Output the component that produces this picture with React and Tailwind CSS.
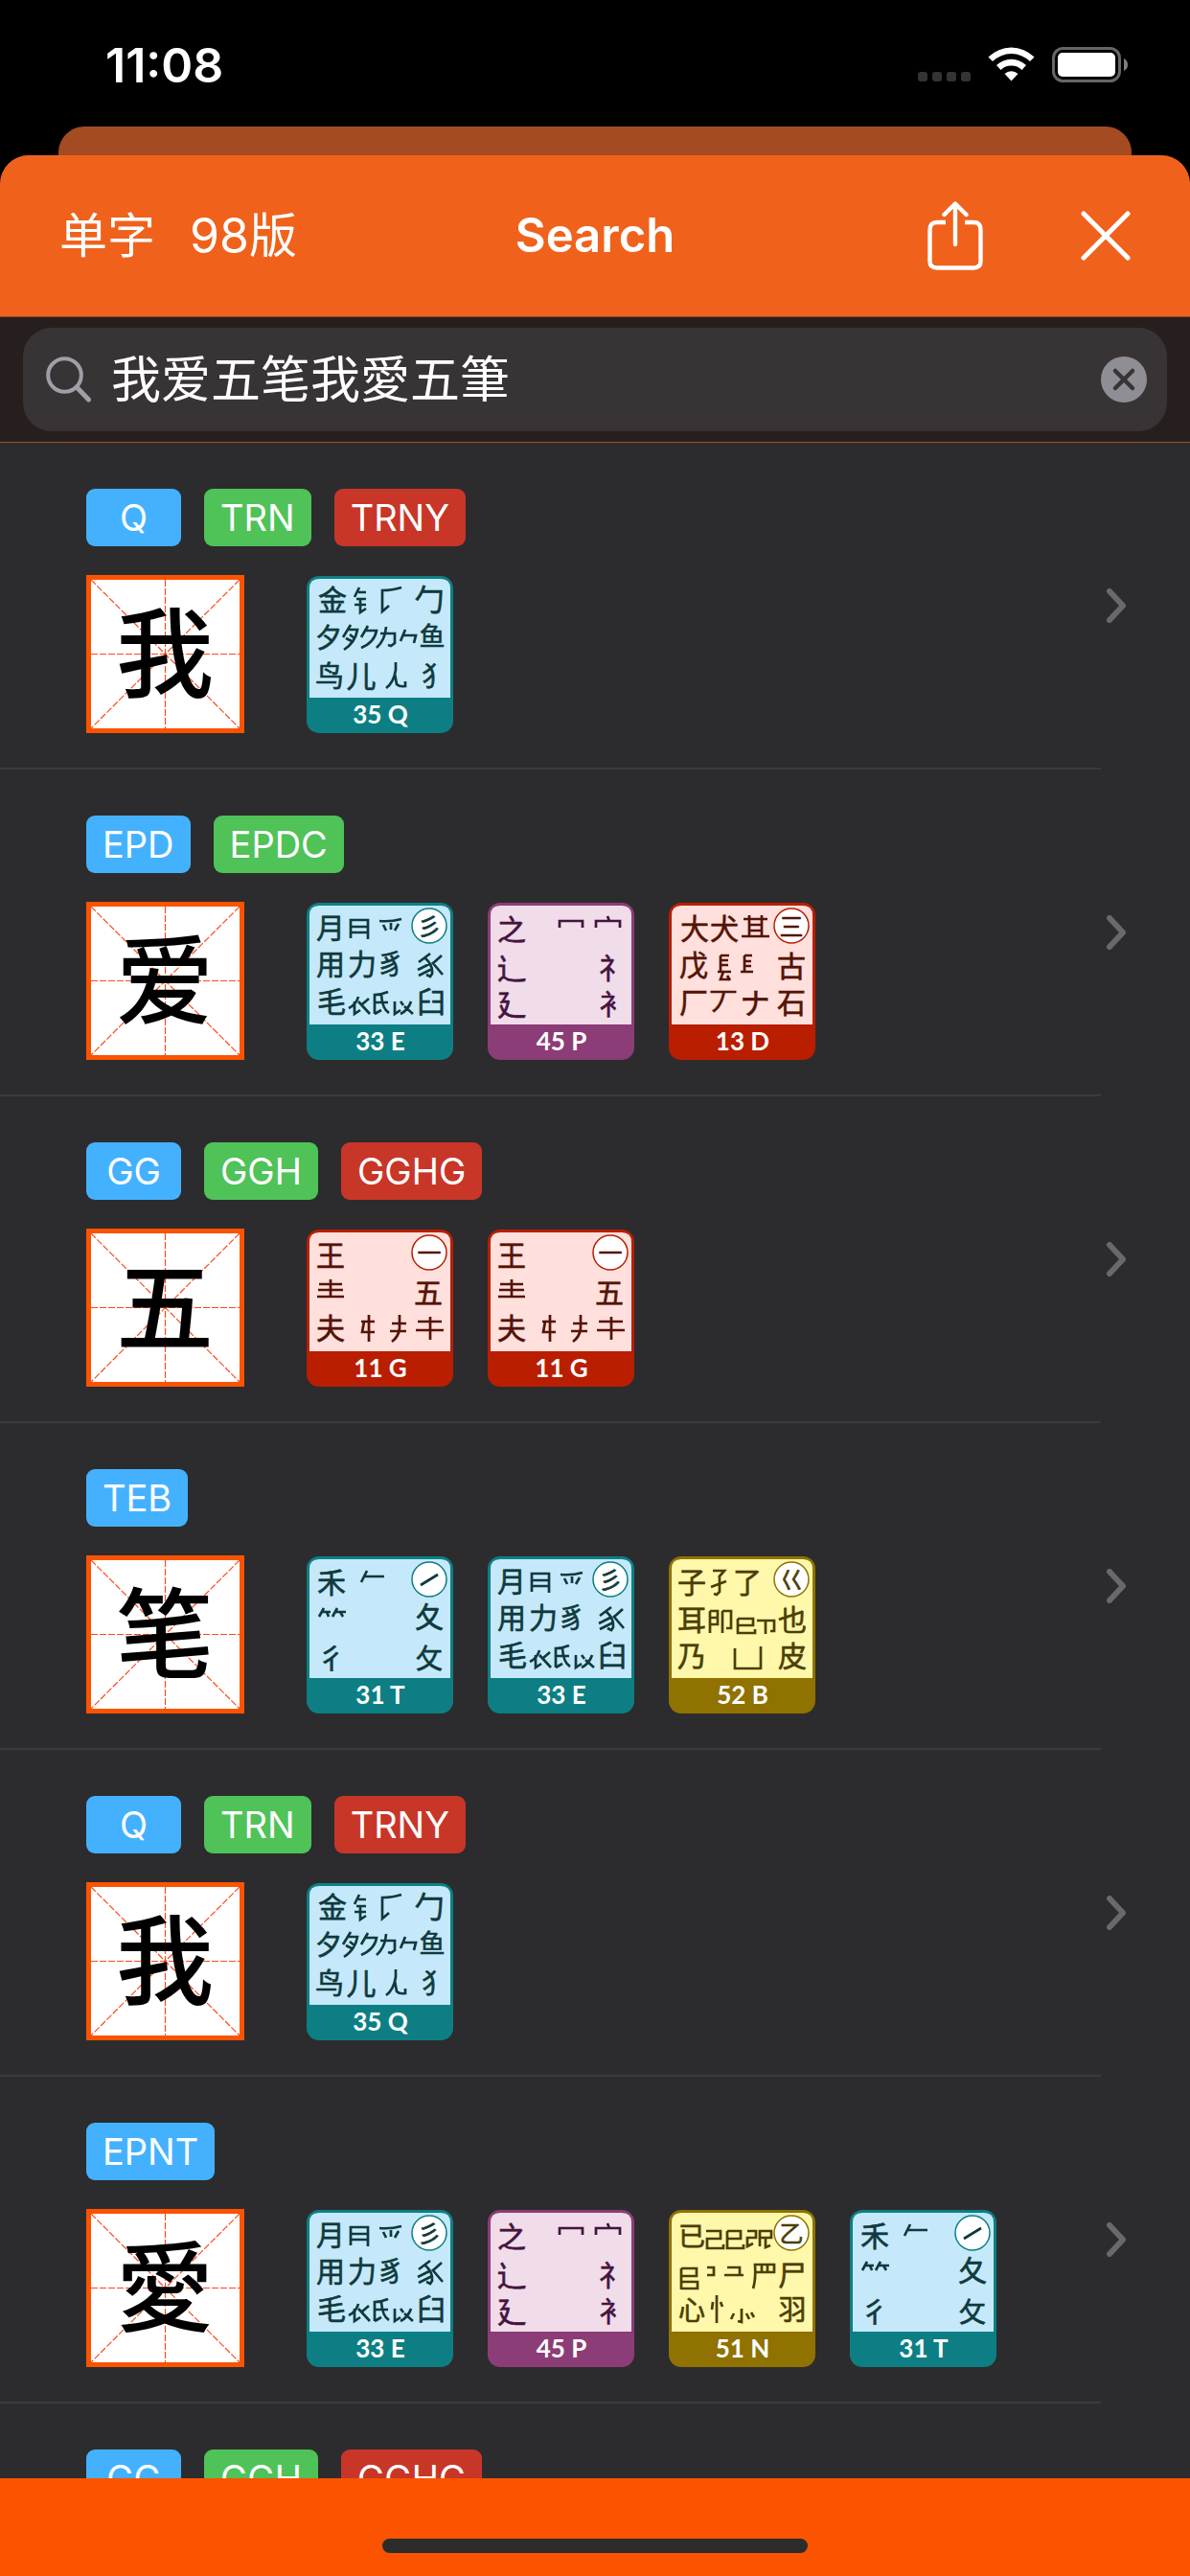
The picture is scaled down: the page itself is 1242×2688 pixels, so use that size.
import { useState } from "react";

// g: [character, center x, center y, size], s: strokes for parts that have no character of their own
const KEYS = {
  Q: {
    zone: "teal",
    label: "35 Q",
    g: [["金", 27, 26, 30], ["勹", 128, 25, 31], ["夕", 23, 65, 28], ["鱼", 131, 64, 27], ["鸟", 24, 105, 30], ["儿", 57, 105, 31], ["犭", 134, 105, 28]],
    s: "M55 13L50 23M54 18H62M52 25H62M50 31H62M56 25V39L62 35M99 13Q90 16 79 16V38L86 32M46 52L38 65M44 57H53Q51 70 39 78M41 66L47 69M45 62L50 66M64 53L57 65M62 58H73Q71 70 57 76M83 54Q82 68 73 76M77 61H92V71L88 74L85 73M103 57L98 69M101 63H114L112 71M93 91V99Q91 112 83 118M92 103L94 114Q97 117 103 116V111",
  },
  E: {
    zone: "teal",
    label: "33 E",
    circle: "彡",
    g: [["月", 25, 27, 30], ["用", 25, 65, 30], ["力", 58, 65, 30], ["豸", 88, 65, 29], ["毛", 26, 104, 30], ["臼", 130, 104, 30]],
    s: "M46 38V19H64V39M46 26H64M46 32H64M76 20Q88 21 99 18M80 24L83 30M88 22V29M96 23L92 30M129 54L117 63M124 59Q132 66 131 75L129 78L125 76M128 65L116 71M131 70L117 77M141 56L131 65M131 63L142 76M54 99Q52 107 44 111M50 104V117L56 113M54 104L66 117M65 101L58 107M71 117V97Q78 97 85 94M71 105H85M78 97Q79 112 86 116M71 117L78 113M92 104V117L98 113M98 104L101 108M109 104Q106 113 98 117M102 109L111 117",
  },
  P: {
    zone: "purple",
    label: "45 P",
    g: [["之", 25, 29, 30], ["辶", 25, 69, 31], ["礻", 131, 69, 30], ["廴", 25, 107, 31], ["衤", 131, 107, 29]],
    s: "M75 27V20H99V27M113 27V20H138V27M125 15L127 20",
  },
  D: {
    zone: "red",
    label: "13 D",
    circle: "三",
    g: [["大", 27, 28, 30], ["犬", 58, 28, 30], ["戊", 26, 66, 30], ["古", 128, 67, 30], ["厂", 26, 105, 30], ["丆", 57, 105, 30], ["ナ", 90, 105, 31], ["石", 128, 105, 30]],
    s: "M78 18H103M84 14V36M97 14V36M84 24H97M84 30H97M76 36H105M54 56V73M54 56H63M54 61H62M54 66H62M51 73H65M57 73L54 81H63M61 77L64 82M79 56V73M79 56H87M79 62H86M79 67H86M75 73H88",
  },
  G: {
    zone: "red",
    label: "11 G",
    circle: "一",
    g: [["王", 25, 28, 30], ["五", 127, 67, 30], ["夫", 25, 104, 30]],
    s: "M13 58H37M12 64H38M11 71H39M25 53V71M57 97H71M65 90V118M60 97L58 108H71M97 90V104Q96 113 89 118M89 99H104M87 107H104M116 97H141M114 106H143M129 92V116",
  },
  T: {
    zone: "teal",
    label: "31 T",
    circle: "",
    g: [["禾", 26, 28, 30], ["夂", 128, 64, 30], ["彳", 26, 107, 30], ["攵", 128, 107, 28]],
    s: "M63 16L57 28M61 22H81M119 31L137 20M18 55L13 64M16 59H25M21 59L23 64M32 55L27 64M30 59H41M35 59L38 64",
  },
  B: {
    zone: "olive",
    label: "52 B",
    circle: "巜",
    g: [["子", 24, 28, 30], ["了", 82, 28, 30], ["耳", 24, 67, 30], ["也", 129, 67, 30], ["乃", 24, 105, 30], ["皮", 129, 105, 30]],
    s: "M46 16H58L52 23M53 23V38L50 41L47 40M44 33L60 27M43 58V81M43 58H51V72H43M43 65H51M56 58V81M56 58H65V76H60M72 66H88V73H72M72 66V81H90V77M92 68H110V79H106M101 68V82M69 97V118H96M96 95V119",
  },
  N: {
    zone: "olive",
    label: "51 N",
    circle: "乙",
    g: [["已", 24, 28, 28], ["尸", 129, 69, 30], ["心", 24, 105, 28], ["羽", 129, 105, 29]],
    s: "M39 23H54V31H40V41H57V37M61 23H75V31H61M61 23V41H78V37M82 23H91V30H82V39L88 36M95 39V23H107V30H95M101 30V40L106 38M13 62H29V70H13M13 62V84M13 76H30V83H13M40 61H47V69H40M61 61H74V68M58 69H78M88 83Q91 74 90 58H110V66H91M97 58V66M103 58V66M50 90V119M46 97L45 105M54 97L56 102M76 104V118L72 117M68 109L65 115M81 109L84 115M86 108L89 113",
  },
};

const ZONES = {
  teal: { frame: "#0d7f84", panel: "#c5e9fb", ink: "#0f3a3d" },
  purple: { frame: "#8c3c77", panel: "#f1dce9", ink: "#43143f" },
  red: { frame: "#b91e00", panel: "#ffe0dc", ink: "#551306" },
  olive: { frame: "#8f7200", panel: "#fff8ab", ink: "#4c3e04" },
};

const CODE_COLORS = {
  blue: "bg-[#44b1ff]",
  green: "bg-[#4fc258]",
  red: "bg-[#c83628]",
};

const RESULTS = [
  { char: "我", codes: [["Q", "blue"], ["TRN", "green"], ["TRNY", "red"]], keys: ["Q"] },
  { char: "爱", codes: [["EPD", "blue"], ["EPDC", "green"]], keys: ["E", "P", "D"] },
  { char: "五", codes: [["GG", "blue"], ["GGH", "green"], ["GGHG", "red"]], keys: ["G", "G"] },
  { char: "笔", codes: [["TEB", "blue"]], keys: ["T", "E", "B"] },
  { char: "我", codes: [["Q", "blue"], ["TRN", "green"], ["TRNY", "red"]], keys: ["Q"] },
  { char: "愛", codes: [["EPNT", "blue"]], keys: ["E", "P", "N", "T"] },
  { char: "五", codes: [["GG", "blue"], ["GGH", "green"], ["GGHG", "red"]], keys: ["G", "G"] },
];

function Glyph({ char, x, y, size }) {
  return (
    <text x={x} y={Math.round(y + size * 0.38)} fontSize={size} textAnchor="middle">
      {char}
    </text>
  );
}

function KeyCard({ name }) {
  const { zone, label, circle, g, s } = KEYS[name];
  const { frame, panel, ink } = ZONES[zone];
  return (
    <svg viewBox="0 0 153 165" className="h-[165px] w-[153px] shrink-0 font-['Noto_Sans_CJK_SC',sans-serif]">
      <rect x="0" y="1" width="153" height="164" rx="13" fill={frame} />
      <path d="M3 128V14Q3 4 13 4H140Q150 4 150 14V128Z" fill={panel} />
      {circle !== undefined && <circle cx="128" cy="25" r="18" fill="#fff" stroke={frame} strokeWidth="1.5" />}
      <g fill={ink} stroke={ink} strokeWidth="0.6">
        {g.map(([char, x, y, size]) => (
          <Glyph key={char} char={char} x={x} y={y} size={size} />
        ))}
        {circle && <Glyph char={circle} x={128} y={25} size={25} />}
      </g>
      <path d={s} fill="none" stroke={ink} strokeWidth="2.7" />
      <text x="77" y="155" fontSize="26" textAnchor="middle" fill="#fff" className="font-['Lato',sans-serif] font-bold">
        {label}
      </text>
    </svg>
  );
}

function CharTile({ char }) {
  return (
    <svg viewBox="0 0 165 165" className="mr-[29px] size-[165px] shrink-0 font-['Noto_Sans_CJK_SC',sans-serif]">
      <rect x="2.5" y="2.5" width="160" height="160" fill="#fff" stroke="#fb5300" strokeWidth="5" />
      <g stroke="#fb4a1c" strokeWidth="1.2" strokeDasharray="7 2">
        <path d="M5 5L160 160M160 5L5 160M82.5 5V160M5 82.5H160" />
      </g>
      <text x="82" y="120" fontSize="102" textAnchor="middle" className="font-medium">
        {char}
      </text>
    </svg>
  );
}

function ResultRow({ char, codes, keys }) {
  return (
    <li>
      <a href="#detail" className="flex items-center justify-between pr-[66px] pl-[90px]">
        <div className="flex flex-col gap-[30px] pt-12 pb-9">
          <div className="flex gap-6">
            {codes.map(([code, color]) => (
              <span
                key={code}
                className={`flex h-[60px] min-w-[99px] items-center justify-center rounded-[9px] px-[17px] text-[38px] ${CODE_COLORS[color]}`}
              >
                {code}
              </span>
            ))}
          </div>
          <div className="flex gap-9">
            <CharTile char={char} />
            {keys.map((name, i) => (
              <KeyCard key={i} name={name} />
            ))}
          </div>
        </div>
        <svg viewBox="0 0 22 36" className="h-9 w-[22px] shrink-0" fill="none" stroke="#68686d" strokeWidth="6" strokeLinecap="round" strokeLinejoin="round">
          <path d="M4 3L18 18L4 33" />
        </svg>
      </a>
      <div className="mr-[93px] h-[2px] bg-[#3b3b3e]" />
    </li>
  );
}

function StatusBar() {
  return (
    <div className="flex h-[132px] shrink-0 items-center justify-between pt-1 pr-[65px] pl-[110px]">
      <span className="text-[50px] font-semibold">11:08</span>
      <div className="flex items-center">
        <svg viewBox="0 0 220 38" className="h-[38px] w-[220px]">
          <g fill="#343434">
            <rect x="1" y="26" width="10" height="10" rx="3" />
            <rect x="16" y="26" width="10" height="10" rx="3" />
            <rect x="31" y="26" width="10" height="10" rx="3" />
            <rect x="46" y="26" width="10" height="10" rx="3" />
          </g>
          <g fill="#fff">
            <path d="M74.500 10.500A34 34 0 0 1 122.500 10.500L118 15A28 28 0 0 0 79 15Z" />
            <path d="M83 19A22.500 22.500 0 0 1 114 19L109.500 24A16 16 0 0 0 87.500 24Z" />
            <path d="M91.500 28A10.500 10.500 0 0 1 105.500 28L98.500 35.500Z" />
          </g>
          <rect x="142.500" y="1.500" width="69" height="34" rx="10" fill="none" stroke="#666" strokeWidth="3" />
          <rect x="147" y="6" width="60" height="25" rx="5" fill="#fff" />
          <path d="M216 12Q220 14 220 18.500Q220 23 216 25Z" fill="#808080" />
        </svg>
      </div>
    </div>
  );
}

export default function App() {
  const [query, setQuery] = useState("我爱五笔我愛五筆");

  return (
    <div className="flex h-screen flex-col overflow-hidden bg-black font-['Inter','Noto_Sans_CJK_SC',sans-serif] text-white">
      <StatusBar />
      <div className="mx-[61px] h-[30px] shrink-0 rounded-t-[27px] bg-[#a44b21]" />
      <div className="flex min-h-0 flex-1 flex-col overflow-hidden rounded-t-[30px] bg-[#2c2c2e]">
        <header className="grid h-[168px] shrink-0 grid-cols-3 items-center bg-[#f0621c] px-[62px]">
          <div className="flex gap-9 text-[50px]">
            <button type="button">单字</button>
            <button type="button">98版</button>
          </div>
          <h1 className="text-center text-[49px] font-semibold">Search</h1>
          <div className="flex items-center justify-end gap-[102px]">
            <button type="button" aria-label="Share">
              <svg viewBox="0 0 58 74" className="h-[74px] w-[58px]" fill="none" stroke="#fff" strokeWidth="4.400" strokeLinecap="round" strokeLinejoin="round">
                <path d="M19 23H10Q2.500 23 2.500 30.500V63.500Q2.500 70.500 10 70.500H48Q55.500 70.500 55.500 63.500V30.500Q55.500 23 48 23H39" strokeLinecap="butt" />
                <path d="M29 46V4M17.500 15L29 3.500L40.500 15" />
              </svg>
            </button>
            <button type="button" aria-label="Close">
              <svg viewBox="0 0 52 52" className="size-[52px]" fill="none" stroke="#fff" strokeWidth="5" strokeLinecap="round">
                <path d="M3 3L49 49M49 3L3 49" />
              </svg>
            </button>
          </div>
        </header>

        <div className="shrink-0 border-t border-b border-t-[#8a4b2f] border-b-[#9a5228] bg-[#271f1e] px-6 py-[11px]">
          <label className="flex h-[108px] items-center gap-5 rounded-[30px] bg-[#383435] pr-[21px] pl-6">
            <svg viewBox="0 0 48 48" className="size-12 shrink-0" fill="none" stroke="#a09fa7" strokeLinecap="round">
              <circle cx="19.500" cy="19.500" r="17.300" strokeWidth="4" />
              <path d="M32 32L44.500 45" strokeWidth="5" />
            </svg>
            <input
              type="text"
              aria-label="Search"
              value={query}
              onChange={(e) => setQuery(e.target.value)}
              className="h-full min-w-0 flex-1 bg-transparent pb-2 text-[52px] outline-none"
            />
            <button type="button" aria-label="Clear" onClick={() => setQuery("")}>
              <svg viewBox="0 0 48 48" className="size-12">
                <circle cx="24" cy="24" r="24" fill="#8f8e94" />
                <path d="M15 15L33 33M33 15L15 33" stroke="#383435" strokeWidth="4.500" strokeLinecap="round" />
              </svg>
            </button>
          </label>
        </div>

        <ul className="min-h-0 flex-1 overflow-y-auto [scrollbar-width:none]">
          {RESULTS.map((result, i) => (
            <ResultRow key={i} {...result} />
          ))}
        </ul>

        <footer className="flex h-[102px] shrink-0 items-end justify-center bg-[#fb5300] pb-6">
          <div className="h-[15px] w-[444px] rounded-full bg-[#2c2c2c]" />
        </footer>
      </div>
    </div>
  );
}
